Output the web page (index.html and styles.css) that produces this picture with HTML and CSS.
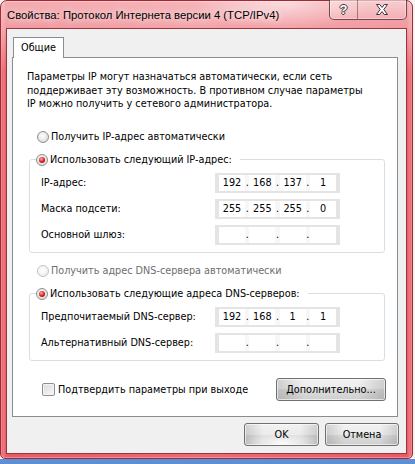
FILE: index.html
```html
<!DOCTYPE html>
<html lang="ru">
<head>
  <meta charset="UTF-8">
  <meta name="viewport" content="width=device-width, initial-scale=1.0">
  <title>Свойства: Протокол Интернета версии 4 (TCP/IPv4)</title>
  <link rel="stylesheet" href="styles.css">
</head>
<body>
  <div class="window">
    <div class="titlebar">
      <span class="title">Свойства: Протокол Интернета версии 4 (TCP/IPv4)</span>
      <div class="caption-btns">
        <span class="cap help">?</span>
        <span class="cap close">
          <svg width="14" height="11" viewBox="0 0 14 11">
            <path d="M1.5 0.5h3.2L7 3.4 9.3 0.5h3.2L8.8 5.5l3.7 5h-3.2L7 7.6 4.7 10.5H1.5l3.7-5z" fill="#fff" stroke="#3f3538" stroke-width="1" stroke-linejoin="round"/>
          </svg>
        </span>
      </div>
    </div>

    <div class="client">
      <div class="tabs">
        <span class="tab">Общие</span>
      </div>

      <div class="panel">
        <p class="intro">Параметры IP могут назначаться автоматически, если сеть<br>поддерживает эту возможность. В противном случае параметры<br>IP можно получить у сетевого администратора.</p>

        <div class="radio-row first"><span class="radio"></span>Получить IP-адрес автоматически</div>

        <fieldset class="group">
          <legend><span class="radio checked"></span>Использовать следующий IP-адрес:</legend>
          <div class="field">
            <span class="lbl">IP-адрес:</span>
            <div class="ip"><span class="cell">192</span><span class="dot">.</span><span class="cell">168</span><span class="dot">.</span><span class="cell">137</span><span class="dot">.</span><span class="cell">1</span></div>
          </div>
          <div class="field">
            <span class="lbl">Маска подсети:</span>
            <div class="ip"><span class="cell">255</span><span class="dot">.</span><span class="cell">255</span><span class="dot">.</span><span class="cell">255</span><span class="dot">.</span><span class="cell">0</span></div>
          </div>
          <div class="field">
            <span class="lbl">Основной шлюз:</span>
            <div class="ip"><span class="cell"></span><span class="dot">.</span><span class="cell"></span><span class="dot">.</span><span class="cell"></span><span class="dot">.</span><span class="cell"></span></div>
          </div>
        </fieldset>

        <div class="radio-row second disabled"><span class="radio"></span>Получить адрес DNS-сервера автоматически</div>

        <fieldset class="group">
          <legend><span class="radio checked"></span>Использовать следующие адреса DNS-серверов:</legend>
          <div class="field">
            <span class="lbl">Предпочитаемый DNS-сервер:</span>
            <div class="ip"><span class="cell">192</span><span class="dot">.</span><span class="cell">168</span><span class="dot">.</span><span class="cell">1</span><span class="dot">.</span><span class="cell">1</span></div>
          </div>
          <div class="field">
            <span class="lbl">Альтернативный DNS-сервер:</span>
            <div class="ip"><span class="cell"></span><span class="dot">.</span><span class="cell"></span><span class="dot">.</span><span class="cell"></span><span class="dot">.</span><span class="cell"></span></div>
          </div>
        </fieldset>

        <div class="bottom-row">
          <label class="check"><span class="box"></span>Подтвердить параметры при выходе</label>
          <button type="button" class="btn advanced">Дополнительно...</button>
        </div>
      </div>

      <div class="footer">
        <button type="button" class="btn ok">OK</button>
        <button type="button" class="btn cancel">Отмена</button>
      </div>
    </div>
  </div>
</body>
</html>
```

FILE: styles.css
```css
:root {
  --edge: #9e2a33;
  --tab-border: #898c95;
  --group-border: #d5dfe5;
  --text: #000;
  --text-disabled: #6d6d6d;
}

* {
  box-sizing: border-box;
}

body {
  margin: 0;
  height: 464px;
  background: linear-gradient(#f4f4f4 0, #f4f4f4 459px, #5b8fd6 459px);
  font-family: "DejaVu Sans Condensed", "Liberation Sans", sans-serif;
  font-size: 10.75px;
  color: var(--text);
}

.window {
  width: 413px;
  height: 459px;
  border: 1px solid var(--edge);
  border-radius: 7px 7px 5px 5px;
  padding: 0 5px 4px;
  background:
    radial-gradient(ellipse 90px 26px at 280px 2px, rgba(255, 255, 255, 0.55), rgba(255, 255, 255, 0)),
    linear-gradient(180deg, rgba(255, 255, 255, 0.5) 0, rgba(255, 255, 255, 0.38) 28px, rgba(255, 255, 255, 0) 70px),
    linear-gradient(90deg, #dc4450 0, #f07c84 2px, #e85a64 5px, #ec6a73 50%, #e85a64 calc(100% - 5px), #f07c84 calc(100% - 2px), #dc4450 100%);
  box-shadow: inset 0 0 0 1px rgba(255, 255, 255, 0.3);
}

.titlebar {
  height: 27px;
  display: flex;
  align-items: flex-start;
}

.title {
  flex: 1;
  padding: 7px 0 0 1px;
  font-family: "Liberation Sans", sans-serif;
  font-size: 11.3px;
  line-height: 15px;
  white-space: nowrap;
  text-shadow: 0 0 6px rgba(255, 255, 255, 0.9), 0 0 12px rgba(255, 255, 255, 0.7);
}

.caption-btns {
  display: flex;
  margin-top: -1px;
  height: 20px;
  border: 1px solid rgba(70, 30, 36, 0.75);
  border-top: none;
  border-radius: 0 0 5px 5px;
  background: linear-gradient(rgba(255, 255, 255, 0.4), rgba(255, 255, 255, 0.15));
  box-shadow: inset 0 0 0 1px rgba(255, 255, 255, 0.35);
}

.cap {
  display: flex;
  align-items: center;
  justify-content: center;
}

.help {
  width: 28px;
  border-right: 1px solid rgba(70, 30, 36, 0.45);
  font-family: "Liberation Sans", sans-serif;
  font-weight: bold;
  font-size: 13px;
  color: #fff;
  text-shadow: 1px 0 0 #3f3538, -1px 0 0 #3f3538, 0 1px 0 #3f3538, 0 -1px 0 #3f3538;
}

.close {
  width: 48px;
}

.client {
  height: 426px;
  border: 1px solid #96363f;
  background: #f0f0f0;
  display: flex;
  flex-direction: column;
}

.tabs {
  padding: 8px 0 0 6px;
  display: flex;
}

.tab {
  position: relative;
  z-index: 1;
  height: 21px;
  width: 51px;
  margin-bottom: -1px;
  border: 1px solid var(--tab-border);
  border-bottom: none;
  background: #fff;
  text-align: center;
  line-height: 19px;
}

.panel {
  margin-left: 5px;
  width: 386px;
  height: 360px;
  border: 1px solid var(--tab-border);
  background: #fff;
  padding: 0 0 0 14px;
}

.intro {
  margin: 12px 0 0;
  line-height: 13.5px;
}

.radio-row {
  display: flex;
  align-items: center;
  height: 14px;
  margin-left: 10px;
}

.radio-row.first {
  margin-top: 19px;
}

.radio-row.second {
  margin-top: 11px;
}

.radio-row.disabled {
  color: var(--text-disabled);
}

.radio {
  position: relative;
  display: inline-block;
  flex: none;
  width: 12px;
  height: 12px;
  margin-right: 2px;
  border-radius: 50%;
  border: 1px solid #8e8f8f;
  background: radial-gradient(circle at 45% 40%, #ffffff 0, #e6e6e6 55%, #cdcdcd 100%);
}

.disabled .radio {
  border-color: #c2c2c2;
  background: radial-gradient(circle at 45% 40%, #ffffff 0, #f2f2f2 60%, #e4e4e4 100%);
}

.radio.checked::after {
  content: "";
  position: absolute;
  left: 2px;
  top: 2px;
  width: 6px;
  height: 6px;
  border-radius: 50%;
  background: radial-gradient(circle at 40% 35%, #ffb0b0 0, #e42020 50%, #8a0000 100%);
}

.group {
  margin: 9px 0 0 2px;
  width: 356px;
  border: 1px solid var(--group-border);
  border-radius: 3px;
  padding: 6px 0 7px;
}

.group legend {
  margin-left: 6px;
  padding: 0 8px 0 0;
  height: 14px;
  line-height: 14px;
  display: flex;
  align-items: center;
}

.field {
  display: flex;
  align-items: center;
  height: 20px;
  padding-left: 11px;
}

.field + .field {
  margin-top: 6px;
}

.lbl {
  width: 174px;
}

.ip {
  display: flex;
  justify-content: space-between;
  width: 125px;
  height: 20px;
  padding: 2px 4px;
  background: #e4e4e4;
}

.cell {
  width: 26px;
  background: #fff;
  text-align: center;
  line-height: 16px;
}

.dot {
  flex: 1;
  background: #f7f7f7;
  text-align: center;
  line-height: 16px;
}

.bottom-row {
  display: flex;
  align-items: center;
  justify-content: space-between;
  margin: 17px 11px 0 15px;
  height: 23px;
}

.check {
  display: flex;
  align-items: center;
}

.box {
  width: 13px;
  height: 13px;
  margin-right: 3px;
  border: 1px solid #8f8f8f;
  border-radius: 2px;
  background: linear-gradient(135deg, #dcdcdc, #f6f6f6);
  box-shadow: inset 0 0 0 1px #f4f4f4;
}

.btn {
  height: 23px;
  padding: 0;
  font: inherit;
  color: #000;
  border: 1px solid #707070;
  border-radius: 3px;
  background:
    linear-gradient(90deg, rgba(0, 0, 0, 0.14), rgba(0, 0, 0, 0) 25%, rgba(0, 0, 0, 0) 75%, rgba(0, 0, 0, 0.14)),
    linear-gradient(#f2f2f2 0, #ebebeb 50%, #dddddd 50%, #cfcfcf 100%);
  box-shadow: inset 0 0 0 1px rgba(255, 255, 255, 0.6);
}

.advanced {
  width: 110px;
}

.footer {
  display: flex;
  justify-content: flex-end;
  gap: 6px;
  margin-top: 6px;
  padding-right: 7px;
}

.ok {
  width: 75px;
  background:
    radial-gradient(ellipse 40px 10px at 50% 90%, rgba(255, 255, 255, 0.9), rgba(255, 255, 255, 0)),
    linear-gradient(90deg, rgba(0, 0, 0, 0.14), rgba(0, 0, 0, 0) 25%, rgba(0, 0, 0, 0) 75%, rgba(0, 0, 0, 0.14)),
    linear-gradient(#f2f2f2 0, #ebebeb 50%, #dddddd 50%, #cfcfcf 100%);
}

.cancel {
  width: 74px;
}
```
